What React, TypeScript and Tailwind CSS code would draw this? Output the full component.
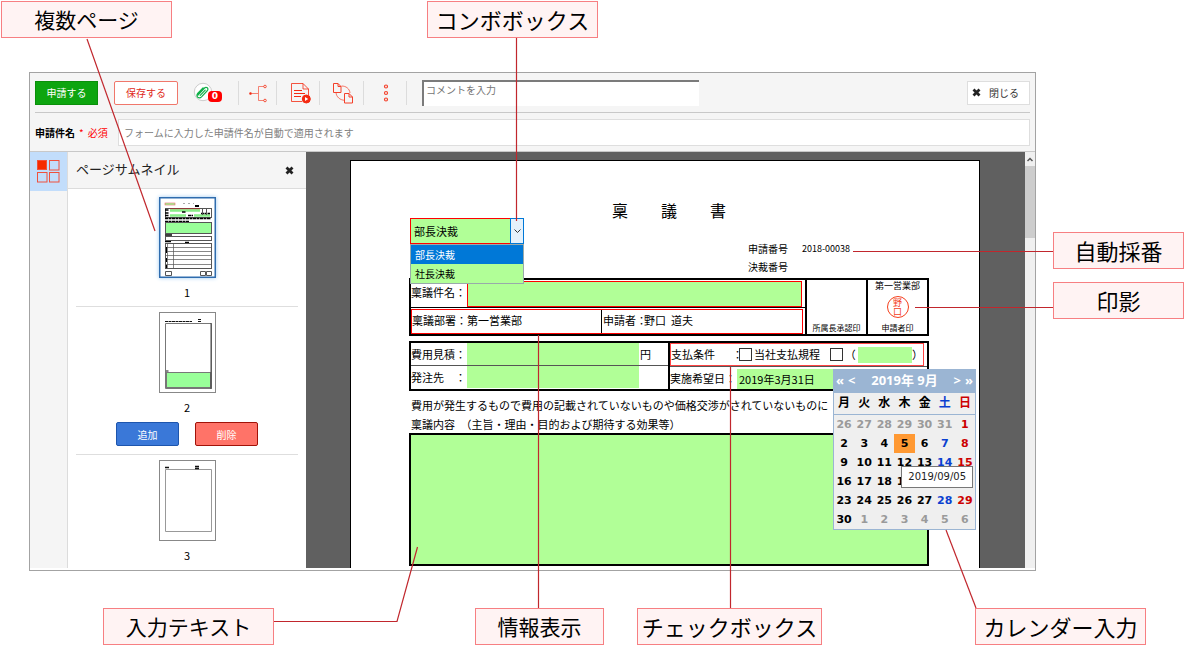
import React, { useState } from "react";

const weekDays = ["月", "火", "水", "木", "金", "土", "日"];
const weeks: number[][] = [
  [26, 27, 28, 29, 30, 31, 1],
  [2, 3, 4, 5, 6, 7, 8],
  [9, 10, 11, 12, 13, 14, 15],
  [16, 17, 18, 19, 20, 21, 22],
  [23, 24, 25, 26, 27, 28, 29],
  [30, 1, 2, 3, 4, 5, 6],
];

const dayColor = (row: number, col: number, day: number) => {
  if ((row === 0 && day > 20) || (row === 5 && day < 10)) {
    return "text-[#9a9a9a]";
  }
  if (col === 5) return "text-[#0a3fd0]";
  if (col === 6) return "text-[#cc0000]";
  return "text-black";
};

const Callout: React.FC<{ text: string; className: string }> = ({
  text,
  className,
}) => (
  <div
    className={`flex h-[37px] shrink-0 items-center justify-center whitespace-nowrap border border-[#f77f82] bg-[#fff3f3] pb-0.5 leading-8 ${className}`}
  >
    {text}
  </div>
);

const CalloutLines: React.FC = () => (
  <svg
    className="pointer-events-none absolute left-0 top-0 z-30"
    width="1184"
    height="645"
    fill="none"
    stroke="#c1272d"
    strokeWidth="1.2"
    aria-hidden="true"
  >
    <path d="M87 39L155 231" />
    <path d="M516.5 38V221" />
    <path d="M853 251.500H1053" />
    <path d="M915 307.500H1053" />
    <path d="M274 621.500H397L417.500 547" />
    <path d="M538.500 335V608" />
    <path d="M730.500 367V608" />
    <path d="M946 530L976 608" />
  </svg>
);

const CloseMark: React.FC = () => (
  <svg width="9" height="9" viewBox="0 0 9 9" aria-hidden="true">
    <path d="M1.500 1.500L7.500 7.500M7.500 1.500L1.500 7.500" stroke="#222" strokeWidth="2.800" />
  </svg>
);

const Separator: React.FC = () => <div className="h-6 w-px bg-[#dcdcdc]" />;

const Toolbar: React.FC = () => (
  <div className="mx-[5px] flex h-10 items-center border-b border-[#c8c8c8] text-[10px]">
    <button className="h-6 w-[63px] border border-[#0a8f0a] bg-[#0da50f] text-white">
      申請する
    </button>
    <button className="ml-4 h-6 w-16 rounded-xs border border-[#f0776b] bg-white text-[#e02a1a]">
      保存する
    </button>
    <button className="ml-[14px] flex w-[46px] items-center" aria-label="添付ファイル">
      <svg className="shrink-0" width="22" height="22" viewBox="0 0 22 22" fill="none">
        <circle cx="11" cy="10" r="8.700" fill="#fff" stroke="#ccc" />
        <g stroke="#12b04a" strokeWidth="1.200" strokeLinecap="round">
          <path d="M6 13L12 6.500C13 5.400 14.300 5 15.300 5.800C16.300 6.700 16 8 15 9L9.500 14.800C8.500 15.800 7 16.100 5.800 15.200C4.600 14.200 4.700 12.700 5.700 11.500L11 5.800" />
          <path d="M13.200 8.200L8.200 13.400M10.500 7.500L6.800 11.600" />
        </g>
      </svg>
      <span className="z-10 -ml-1.5 mt-2 h-[11px] w-[14px] rounded-sm bg-[#f00] text-center font-['DejaVu_Sans'] text-[9px] font-bold leading-[11px] text-white">
        0
      </span>
    </button>
    <Separator />
    <button className="flex w-[37px] justify-center" aria-label="経路">
      <svg width="20" height="20" viewBox="0 0 20 20" fill="none" stroke="#f4513c">
        <path d="M3 10.500H10M16 3.500H10.500V17.500H16" strokeOpacity=".7" />
        <circle cx="2.500" cy="10.500" r="1" fill="#f42a12" />
        <circle cx="17" cy="3.500" r="1.300" />
        <circle cx="17" cy="17.500" r="1.300" />
      </svg>
    </button>
    <Separator />
    <button className="flex w-[42px] justify-center pl-1.5" aria-label="履歴">
      <svg width="22" height="22" viewBox="0 0 22 22" fill="none" stroke="#f42a12">
        <path d="M12 19.500H1.500V1.500H13L18.500 7V13M13 1.500V7H18.500" strokeOpacity=".8" />
        <path d="M4 8.500H12M4 11.500H15M4 14.500H11" />
        <circle cx="16.300" cy="17" r="4" fill="#f42a12" />
        <path d="M15 15L18.300 17L15 19Z" fill="#fff" stroke="none" />
      </svg>
    </button>
    <Separator />
    <button className="flex w-[43px] justify-center pl-0.5" aria-label="引用">
      <svg width="22" height="22" viewBox="0 0 22 22" fill="none" stroke="#f4402a">
        <path d="M1.500 1.500H6L9 4.500V10.500H1.500ZM6 1.500V4.500H9" />
        <path d="M12.500 11.500H17L20.500 15V21H12.500ZM17 11.500V15H20.500" />
        <path d="M9.500 4C14 4 17.500 6.500 18 11M4 10.500C4.300 15 8 18 12.500 18.300" strokeOpacity=".7" />
      </svg>
    </button>
    <Separator />
    <button className="flex w-[42px] justify-center pl-0.5" aria-label="その他">
      <svg width="8" height="20" viewBox="0 0 8 20" fill="none" stroke="#f4402a" strokeWidth="1.200">
        <circle cx="4" cy="3.500" r="1.500" />
        <circle cx="4" cy="10" r="1.500" />
        <circle cx="4" cy="16.500" r="1.500" />
      </svg>
    </button>
    <Separator />
    <input
      type="text"
      aria-label="コメント"
      placeholder="コメントを入力"
      className="ml-[15px] h-[26px] w-[277px] border-l-2 border-t-2 border-[#7b7b7b] bg-white pb-2 pl-0.5 placeholder-[#757575]"
    />
    <button className="ml-auto flex h-6 w-[63px] items-center gap-2 border border-[#dedede] bg-white pl-1 text-[#333]">
      <CloseMark />
      閉じる
    </button>
  </div>
);

const Thumbnail: React.FC<{ page: number }> = ({ page }) => (
  <svg
    width="57"
    height="81"
    viewBox="0 0 57 81"
    fill="none"
    className={page === 1 ? "shadow-[0_0_4px_#9cc8f0]" : ""}
  >
    <rect
      x=".5"
      y=".5"
      width="56"
      height="80"
      fill="#fff"
      stroke={page === 1 ? "#2f6cae" : "#888"}
      strokeWidth={page === 1 ? 2 : 1}
    />
    {page === 1 && (
      <g stroke="#555">
        <rect x="6" y="6" width="10" height="2" fill="#99ff99" stroke="#e66" strokeWidth=".6" />
        <path d="M24 6.500H35" stroke="#aaa" strokeDasharray="2 3" />
        <path d="M36 9H40" stroke="#000" strokeWidth="2" />
        <rect x="6.500" y="11.500" width="46" height="9" />
        <path d="M11 12H41" stroke="#c22" />
        <path d="M11 13.500H41M11 18.500H27M35 18.500H51" stroke="#88ee88" strokeWidth="2.500" />
        <path d="M6 13H10M6 16H10M23 15H27M6 18.500H10M29 18.500H34M6 21.500H52M6 24.500H30M42 16.500H51" stroke="#000" strokeWidth="1.500" strokeDasharray="3 .5" />
        <path d="M43.500 12V18M47.500 12V18" />
        <rect x="6.500" y="25.500" width="46" height="11" fill="#99ff99" />
        <path d="M6 38H13M26 45.500H30M6 44.500H12" stroke="#000" strokeWidth="1.500" />
        <rect x="6.500" y="39.500" width="46" height="4" />
        <rect x="6.500" y="46.500" width="46" height="25" />
        <path d="M14.500 46V71M8.500 46V71M6 50.500H52M6 54.500H52M6 58.500H52M6 62.500H52M6 67.500H52" strokeWidth=".7" />
        <path d="M7.500 50V56M7.500 61V65M7.500 68V71" stroke="#000" />
        <path d="M6.500 74.500H12.500V78.500H6.500ZM41.500 74.500H46.500V78.500H41.500ZM47.500 74.500H52.500V78.500H47.500Z" />
      </g>
    )}
    {page === 2 && (
      <g stroke="#777">
        <path d="M6 9.500H33M39 7.500H42M39 9.500H42M6 59H10" stroke="#111" strokeDasharray="3 .5" />
        <path d="M6.500 11.500H52.500V76.500H6.500Z" />
        <rect x="7.500" y="60.500" width="44" height="15" fill="#99ff99" />
        <path d="M52 11V77" stroke="#444" />
      </g>
    )}
    {page === 3 && (
      <g stroke="#999">
        <path d="M6.500 9.500H52.500V71.500H6.500Z" />
        <path d="M6 7.500H10M36 6.500H40M36 8.500H40" stroke="#111" strokeWidth="1.300" />
      </g>
    )}
  </svg>
);

const ThumbnailItem: React.FC<{ page: number; actions?: boolean }> = ({
  page,
  actions,
}) => (
  <li className="flex flex-col items-center border-b border-[#dedede] pb-1 pt-[5px] text-[11px] last:border-0 last:pb-0">
    <button aria-label={`ページ${page}`}>
      <Thumbnail page={page} />
    </button>
    <span className="mt-1.5 leading-4">{page}</span>
    {actions ? (
      <div className="mt-[7px] flex gap-4 pb-1 text-[10px] text-white">
        <button className="h-6 w-[63px] rounded-xs border border-[#1d55ad] bg-[#3a78d8]">
          追加
        </button>
        <button className="h-6 w-[63px] rounded-xs border border-[#a11208] bg-[#ff7368]">
          削除
        </button>
      </div>
    ) : (
      <div className="h-0.5" />
    )}
  </li>
);

const Sidebar: React.FC = () => (
  <>
    <nav className="w-[38px] shrink-0 border-r border-[#dcdcdc] bg-[#f5f5f5]">
      <button className="flex h-[39px] w-[37px] items-center justify-center bg-[#c2ddfb]" aria-label="サムネイル">
        <svg width="23" height="23" viewBox="0 0 23 23" fill="none" stroke="#f0503c">
          <rect x=".5" y=".5" width="9" height="9" fill="#f62a00" />
          <rect x="12.500" y=".5" width="9.500" height="9.500" />
          <rect x=".5" y="12.500" width="9.500" height="9.500" />
          <rect x="12.500" y="12.500" width="9.500" height="9.500" />
        </svg>
      </button>
    </nav>
    <aside className="w-[238px] shrink-0 bg-white">
      <div className="flex h-[37px] items-center justify-between border-b border-[#dcdcdc] bg-[#f5f5f5] pl-2 pr-3">
        <h2 className="pb-0.5 text-[13px] text-[#222]">ページサムネイル</h2>
        <button aria-label="パネルを閉じる">
          <CloseMark />
        </button>
      </div>
      <ul className="px-2 pt-[3px]">
        <ThumbnailItem page={1} />
        <ThumbnailItem page={2} actions />
        <ThumbnailItem page={3} />
      </ul>
    </aside>
  </>
);

const ApprovalSelect: React.FC = () => {
  const [value, setValue] = useState<string>("部長決裁");

  return (
    <div className="relative z-10 ml-px w-[114px]">
      <select
        aria-label="決裁区分"
        value={value}
        onChange={(e) => setValue(e.target.value)}
        className="h-[26px] w-full appearance-none border border-[#f00] bg-[#b1ff97] pl-[3px] text-[11px]"
      >
        <option>部長決裁</option>
        <option>社長決裁</option>
      </select>
      <span className="pointer-events-none absolute right-0 top-0 flex h-[26px] w-[14px] items-center justify-center border border-[#0078d7] bg-[#e5f1fb]">
        <svg width="7" height="5" viewBox="0 0 7 5" fill="none" stroke="#333">
          <path d="M.5 .5L3.500 3.500L6.500 .5" />
        </svg>
      </span>
      <ul className="absolute left-0 top-[26px] w-full border border-[#9aa] text-[10px] leading-[19px]">
        <li className="bg-[#0078d7] pl-1 text-white">部長決裁</li>
        <li className="bg-[#b1ff97] pl-1">社長決裁</li>
      </ul>
    </div>
  );
};

const Calendar: React.FC = () => (
  <div className="absolute left-24 top-0 z-20 w-[143px] border border-[#9bb5d3] bg-[#efefef] font-['DejaVu_Sans','Noto_Sans_CJK_JP',sans-serif] font-bold">
    <div className="flex h-[23px] items-center justify-between bg-[#9bb5d3] px-0.5 pb-0.5 font-['Noto_Sans','Noto_Sans_CJK_JP',sans-serif] text-[13px] text-white">
      <div className="flex gap-1">
        <button aria-label="前年">«</button>
        <button aria-label="前月">&lt;</button>
      </div>
      <span className="whitespace-nowrap">2019年 9月</span>
      <div className="flex gap-1">
        <button aria-label="翌月">&gt;</button>
        <button aria-label="翌年">»</button>
      </div>
    </div>
    <table className="w-full table-fixed border-collapse text-center text-[11px]">
      <thead>
        <tr className="h-[21px] border-b border-[#9bb5d3] text-[12px]">
          {weekDays.map((d, i) => (
            <th key={d} className={`p-0 leading-5 ${dayColor(1, i, 1)}`}>
              {d}
            </th>
          ))}
        </tr>
      </thead>
      <tbody>
        {weeks.map((week, row) => (
          <tr key={row}>
            {week.map((day, col) => (
              <td
                key={col}
                className={`h-[19px] p-0 leading-[19px] ${dayColor(row, col, day)} ${
                  row === 1 && day === 5 ? "bg-[#ff9933]" : ""
                }`}
              >
                {day}
              </td>
            ))}
          </tr>
        ))}
      </tbody>
    </table>
    <div className="absolute right-0.5 top-24 border border-[#777] bg-white px-1.5 text-[10px] font-normal leading-5 text-[#222]">
      2019/09/05
    </div>
  </div>
);

const Stamp: React.FC = () => (
  <div className="flex size-[22px] flex-col items-center justify-center rounded-full border border-[#f4401c] text-[9px] leading-[9px] text-[#f4401c]">
    <span>野</span>
    <span>口</span>
  </div>
);

const Checkbox: React.FC<{ label: string }> = ({ label }) => (
  <label className="flex items-center gap-0.5">
    <input type="checkbox" className="size-[13px] appearance-none border border-[#333] bg-white" />
    {label}
  </label>
);

const FormPage: React.FC = () => (
  <div className="min-w-0 flex-1 border border-b-0 border-black bg-white pb-0.5 pl-[58px] pr-[50px] pt-[41px] text-[11px] text-black">
    <h1 className="flex justify-center gap-[33px] text-[16px] leading-4">
      <span>稟</span>
      <span>議</span>
      <span>書</span>
    </h1>

    <div className="flex h-[60px] items-start justify-between">
      <ApprovalSelect />
      <dl className="grid w-[181px] grid-cols-[54px_1fr] self-end pb-0.5 text-[10px] leading-[18px]">
        <dt>申請番号</dt>
        <dd className="text-[9px] leading-[18px]">2018-00038</dd>
        <dt>決裁番号</dt>
        <dd />
      </dl>
    </div>

    <div className="flex h-[58px] border-2 border-black">
      <div className="flex flex-1 flex-col whitespace-nowrap">
        <div className="flex h-7 items-center border-b border-black pr-[3px]">
          <label htmlFor="subject" className="w-14 shrink-0 pb-0.5">
            稟議件名：
          </label>
          <input id="subject" className="h-[26px] min-w-0 flex-1 border border-[#f00] bg-[#b1ff97]" />
        </div>
        <div className="mr-0.5 mt-px flex flex-1 items-stretch border border-[#f00] leading-5">
          <div className="flex w-[190px] border-r border-black">
            <span className="w-[55px]">稟議部署：</span>
            <span>第一営業部</span>
          </div>
          <div className="flex">
            <span className="w-[42px] pl-px">申請者：</span>
            <span>野口&nbsp; 道夫</span>
          </div>
        </div>
      </div>
      <div className="flex w-[61px] flex-col justify-end border-l-2 border-black text-center text-[8px] leading-3">
        所属長承認印
      </div>
      <div className="flex w-[61px] flex-col items-center justify-between border-l-2 border-black text-[8px] leading-3">
        <span className="text-[9px] leading-3">第一営業部</span>
        <Stamp />
        <span>申請者印</span>
      </div>
    </div>

    <div className="mt-[5px] flex h-[50px] whitespace-nowrap border-2 border-black">
      <div className="w-[257px] shrink-0">
        <div className="flex h-[23px] items-center border-b border-[#555]">
          <label htmlFor="estimate" className="w-14">
            費用見積：
          </label>
          <input id="estimate" className="h-full w-[172px] bg-[#b1ff97]" />
          <span className="pl-px">円</span>
        </div>
        <div className="flex h-[23px] items-center">
          <label htmlFor="supplier" className="w-14">
            発注先　：
          </label>
          <input id="supplier" className="h-[22px] w-[172px] self-start bg-[#b1ff97]" />
        </div>
      </div>
      <div className="min-w-0 flex-1 border-l-2 border-black">
        <div className="mr-[3px] flex h-[23px] items-center border border-[#f44]">
          <span className="w-[63px]">支払条件</span>
          <span className="-mr-1">：</span>
          <Checkbox label="当社支払規程" />
          <span className="w-[10px]" />
          <Checkbox label="（" />
          <input aria-label="その他の条件" className="ml-0.5 h-4 w-14 min-w-0 bg-[#b1ff97]" />
          <span>）</span>
        </div>
        <div className="flex h-[23px] border-t border-[#555]">
          <label htmlFor="date" className="w-[67px] shrink-0 leading-[22px]">
            実施希望日：
          </label>
          <div className="relative mt-0.5 min-w-0 flex-1">
            <input
              id="date"
              defaultValue="2019年3月31日"
              className="h-5 w-full bg-[#b1ff97] pl-0.5"
            />
            <Calendar />
          </div>
        </div>
      </div>
    </div>

    <p className="mt-1 overflow-hidden whitespace-nowrap pl-0.5 leading-5">
      費用が発生するもので費用の記載されていないものや価格交渉がされていないものに
    </p>
    <label htmlFor="content" className="block pl-0.5 leading-[18px]">
      稟議内容　（主旨・理由・目的および期待する効果等）
    </label>
    <textarea
      id="content"
      className="block h-[133px] w-full resize-none border-2 border-black bg-[#b1ff97]"
    />
  </div>
);

const App: React.FC = () => {
  return (
    <div className="relative bg-white font-['Noto_Sans_CJK_JP',sans-serif] text-black">
      <header className="flex h-[72px] gap-[255px] pl-px pt-px">
        <Callout text="複数ページ" className="w-[171px] text-[21px]" />
        <Callout text="コンボボックス" className="w-[171px] text-[22px]" />
      </header>

      <div className="flex">
        <main className="ml-[29px] min-w-0 flex-1 border border-[#a3a3a3] bg-[#f5f5f5]">
          <Toolbar />
          <div className="flex h-[38px] items-center px-[5px] text-[10px]">
            <label htmlFor="title" className="flex w-[83px] shrink-0 gap-1">
              <span className="font-bold">申請件名</span>
              <span className="text-[#f00]">*</span>
              <span className="text-[#f00]">必須</span>
            </label>
            <input
              id="title"
              placeholder="フォームに入力した申請件名が自動で適用されます"
              className="h-[27px] min-w-0 flex-1 border border-[#dedede] bg-white pl-[5px] placeholder-[#808080]"
            />
          </div>
          <div className="flex border-t border-[#c8c8c8] bg-white pb-0.5">
            <Sidebar />
            <div className="flex min-w-0 flex-1 bg-[#606060] pl-11 pr-[45px] pt-2">
              <FormPage />
            </div>
            <div className="w-[10px] shrink-0 bg-[#f0f0f0]">
              <div className="flex h-[14px] items-center justify-center">
                <svg width="6" height="5" viewBox="0 0 6 5" fill="none" stroke="#555" strokeWidth="1.500">
                  <path d="M.5 4L3 1.500L5.500 4" />
                </svg>
              </div>
              <div className="h-[72px] bg-[#cdcdcd]" />
            </div>
          </div>
        </main>
        <aside className="flex w-[148px] shrink-0 flex-col gap-[13px] pl-[17px] pt-40">
          <Callout text="自動採番" className="text-[22px]" />
          <Callout text="印影" className="text-[22px]" />
        </aside>
      </div>

      <footer className="flex pl-[103px] pt-[37px]">
        <Callout text="入力テキスト" className="w-[171px] text-[21px]" />
        <Callout text="情報表示" className="ml-[201px] w-[129px] text-[21px]" />
        <Callout text="チェックボックス" className="ml-[33px] w-[185px] text-[22px]" />
        <Callout text="カレンダー入力" className="ml-[153px] w-[171px] text-[22px]" />
      </footer>

      <CalloutLines />
    </div>
  );
};

export default App;
